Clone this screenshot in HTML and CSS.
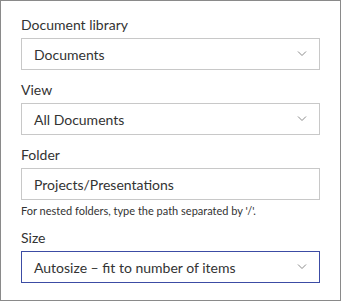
FILE: index.html
```html
<!DOCTYPE html>
<html lang="en">
<head>
    <meta charset="UTF-8">
    <title>Property pane</title>
    <link rel="stylesheet" href="styles.css">
</head>
<body>
    <div class="pane">
        <div class="field first">
            <label class="label">Document library</label>
            <div class="dropdown">
                <span class="value">Documents</span>
                <svg class="chevron" width="10" height="6" viewBox="0 0 10 6"><path d="M1 0.5 L5 4.5 L9 0.5" fill="none" stroke="#8a8a8a" stroke-width="1"/></svg>
            </div>
        </div>

        <div class="field">
            <label class="label">View</label>
            <div class="dropdown">
                <span class="value">All Documents</span>
                <svg class="chevron" width="10" height="6" viewBox="0 0 10 6"><path d="M1 0.5 L5 4.5 L9 0.5" fill="none" stroke="#8a8a8a" stroke-width="1"/></svg>
            </div>
        </div>

        <div class="field">
            <label class="label">Folder</label>
            <div class="textbox">
                <span class="value">Projects/Presentations</span>
            </div>
            <p class="help">For nested folders, type the path separated by '/'.</p>
        </div>

        <div class="field after-help">
            <label class="label">Size</label>
            <div class="dropdown focused">
                <span class="value">Autosize – fit to number of items</span>
                <svg class="chevron" width="10" height="6" viewBox="0 0 10 6"><path d="M1 0.5 L5 4.5 L9 0.5" fill="none" stroke="#8a8a8a" stroke-width="1"/></svg>
            </div>
        </div>
    </div>
</body>
</html>
```

FILE: styles.css
```css
body {
    margin: 0;
    font-family: Lato, "Open Sans", sans-serif;
    color: #333333;
    background: #ffffff;
}
.pane {
    width: 341px;
    height: 301px;
    box-sizing: border-box;
    border: 1px solid #8a8a8a;
    padding: 0 20px;
}
.field {
    margin-top: 10px;
}
.field.first {
    margin-top: 14px;
}
.field.after-help {
    margin-top: 9px;
}
.label {
    display: block;
    font-size: 14px;
    line-height: 20px;
    margin-bottom: 3px;
}
.dropdown, .textbox {
    height: 32px;
    box-sizing: border-box;
    border: 1px solid #c8c8c8;
    display: flex;
    align-items: center;
    justify-content: space-between;
    padding: 0 12px;
}
.dropdown.focused {
    border-color: #3c4ca4;
}
.value {
    font-size: 14px;
    color: #333333;
}
.chevron {
    display: block;
}
.help {
    margin: 0;
    padding-top: 3px;
    font-size: 11px;
    line-height: 16px;
    color: #333333;
}
```
